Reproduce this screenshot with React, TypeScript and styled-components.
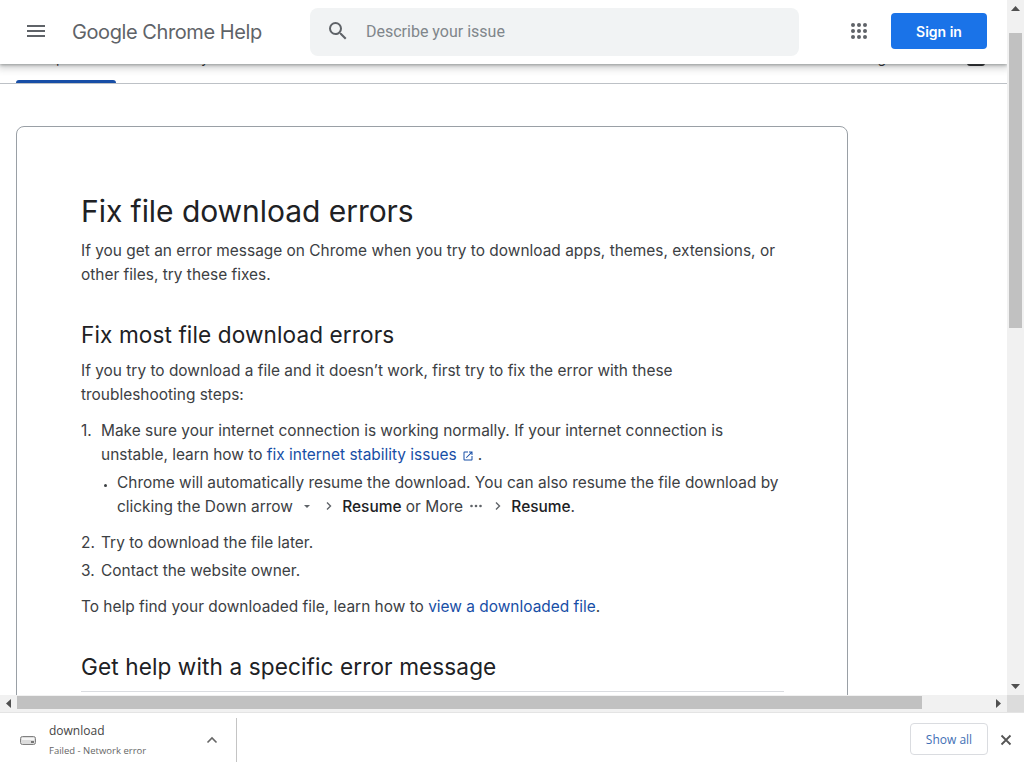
import React from "react";
import styled, { createGlobalStyle } from "styled-components";

const GlobalStyle = createGlobalStyle`
  html, body { margin: 0; padding: 0; height: 100%; overflow: hidden; background: #fff; }
  body { font-family: Inter, Roboto, sans-serif; color: #3c4043; }
  * { box-sizing: border-box; }
`;

const Shell = styled.div`
  width: 1024px;
  height: 768px;
  display: flex;
  flex-direction: column;
  overflow: hidden;
`;

const Viewport = styled.div`
  height: 712px;
  display: grid;
  grid-template-columns: 1007px 17px;
  grid-template-rows: 695px 17px;
`;

const Page = styled.div`
  position: relative;
  overflow: hidden;
  background: #fff;
`;

const Header = styled.header`
  position: absolute;
  top: 0;
  left: 0;
  right: 0;
  height: 64px;
  z-index: 2;
  background: #fff;
  box-shadow: 0 1px 3px rgba(60, 64, 67, 0.45), 0 3px 7px 2px rgba(60, 64, 67, 0.2);
  display: flex;
  align-items: center;
  padding: 0 20px 2px 24px;
`;

const IconButton = styled.div`
  width: 24px;
  height: 24px;
  color: #5f6368;
  flex: none;
`;

const Title = styled.div`
  margin-left: 24px;
  margin-top: 2px;
  width: 238px;
  flex: none;
  font-size: 20px;
  letter-spacing: -0.42px;
  color: #5f6368;
`;

const SearchBox = styled.div`
  width: 489px;
  height: 48px;
  margin-top: 2px;
  flex: none;
  background: #f1f3f4;
  border-radius: 8px;
  display: flex;
  align-items: center;
  padding: 0 16px 2px;
  gap: 16px;
`;

const Placeholder = styled.span`
  font-family: Roboto, sans-serif;
  font-size: 16px;
  color: #80868b;
`;

const Apps = styled.div`
  margin-left: 48px;
  width: 24px;
  height: 24px;
  flex: none;
  color: #5f6368;
`;

const SignIn = styled.div`
  margin-left: 20px;
  width: 96px;
  height: 36px;
  flex: none;
  background: #1a73e8;
  border-radius: 4px;
  color: #fff;
  font-size: 14px;
  font-weight: 600;
  display: flex;
  align-items: center;
  justify-content: center;
`;

const TabStrip = styled.nav`
  height: 84px;
  border-bottom: 1px solid #bdc1c6;
  padding: 0 22px 0 16px;
  display: flex;
  justify-content: space-between;
  align-items: flex-end;
`;

const Tab = styled.div`
  height: 44px;
  padding: 9px 20px 0 17px;
  font-size: 14px;
  line-height: 20px;
  color: #202124;
  white-space: nowrap;
`;

const ActiveTab = styled(Tab)`
  position: relative;
  width: 100px;
  padding: 9px 22px 0 18px;
  text-align: center;

  &::after {
    content: "";
    position: absolute;
    left: 0;
    right: 0;
    bottom: 0;
    height: 3px;
    background: #174ea6;
    border-radius: 3px 3px 0 0;
  }
`;

const ProductTab = styled(Tab)`
  padding-right: 13px;
`;

const TabGroup = styled.div`
  display: flex;
  align-items: flex-end;
`;

const StripBadge = styled.div`
  width: 18px;
  height: 18px;
  margin: 0 0 17px;
  background: #202124;
  border-radius: 3px;
`;

const Card = styled.article`
  width: 832px;
  height: 800px;
  margin: 42px 0 0 16px;
  border: 1px solid #9aa0a6;
  border-radius: 8px;
  padding: 64px 63px 0 64px;
`;

const H1 = styled.h1`
  margin: 0 0 8px;
  font-size: 30px;
  line-height: 40px;
  font-weight: 400;
  letter-spacing: -0.05px;
  color: #202124;
`;

const H2 = styled.h2`
  margin: 0 0 8px;
  font-size: 22.6px;
  line-height: 32px;
  font-weight: 400;
  letter-spacing: 0.1px;
  color: #202124;
`;

const Para = styled.p<{ $after?: number }>`
  margin: 0 0 ${(p) => p.$after ?? 12}px;
  font-size: 15.44px;
  line-height: 24px;
`;

const Steps = styled.ol`
  margin: 0 0 12px;
  padding: 0 0 0 20px;
  font-size: 15.44px;
  line-height: 24px;
  list-style: none;
  counter-reset: step;
`;

const Step = styled.li`
  position: relative;
  margin-bottom: 4px;
  counter-increment: step;

  &::before {
    content: counter(step) ".";
    position: absolute;
    left: -20px;
  }
`;

const SubList = styled.ul`
  margin: 4px 0 12px;
  padding: 0 0 0 16px;
  list-style-type: disc;
`;

const SubItem = styled.li`
  &::marker {
    font-size: 0.7em;
  }
`;

const Link = styled.a`
  color: #174ea6;
`;

const Strong = styled.span`
  font-weight: 500;
  color: #202124;
`;

const InlineIcon = styled.svg<{ $left?: number; $right?: number }>`
  display: inline-block;
  vertical-align: -2px;
  margin: 0 ${(p) => p.$right ?? 4}px 0 ${(p) => p.$left ?? 4}px;
`;

const Rule = styled.div`
  height: 1px;
  background: #dadce0;
  margin-top: 5px;
`;

const ScrollTrackV = styled.div`
  position: relative;
  background: #f1f1f1;
  display: flex;
  flex-direction: column;
  justify-content: space-between;
`;

const ThumbV = styled.div`
  position: absolute;
  top: 33px;
  left: 2px;
  width: 13px;
  height: 295px;
  background: #c1c1c1;
`;

const ScrollTrackH = styled.div`
  position: relative;
  background: #f1f1f1;
  display: flex;
  justify-content: space-between;
`;

const ThumbH = styled.div`
  position: absolute;
  top: 1px;
  left: 17px;
  width: 905px;
  height: 13px;
  background: #c1c1c1;
`;

const Arrow = styled.div`
  width: 17px;
  height: 17px;
  display: flex;
  align-items: center;
  justify-content: center;
  color: #505050;
`;

const Corner = styled.div`
  background: #dcdcdc;
`;

const DownloadBar = styled.footer`
  height: 56px;
  background: #fff;
  border-top: 1px solid #e4e4e4;
  display: flex;
  align-items: center;
  font-family: "Open Sans", sans-serif;
`;

const Item = styled.div`
  width: 237px;
  height: 44px;
  margin-bottom: 2px;
  flex: none;
  border-right: 1px solid #c4c4c4;
  display: flex;
  align-items: center;
  padding-left: 20px;
`;

const FileText = styled.div`
  margin-left: 13px;
  margin-top: 2px;
  width: 157px;
  flex: none;
`;

const FileName = styled.div`
  font-size: 12px;
  line-height: 18px;
  color: #444;
`;

const FileStatus = styled.div`
  font-size: 9.5px;
  line-height: 16px;
  margin-top: 3px;
  color: #666;
`;

const ShowAll = styled.div`
  margin-left: auto;
  width: 78px;
  height: 32px;
  margin-bottom: 3px;
  border: 1px solid #dadce0;
  border-radius: 4px;
  color: #3f6fb5;
  font-size: 12px;
  display: flex;
  align-items: center;
  justify-content: center;
`;

const CloseButton = styled.div`
  width: 36px;
  margin-bottom: 2px;
  display: flex;
  justify-content: center;
  color: #555;
`;

const TriUp = () => (
  <svg width="9" height="5" viewBox="0 0 9 5"><path d="M4.5 0 9 5H0z" fill="currentColor" /></svg>
);
const TriDown = () => (
  <svg width="9" height="5" viewBox="0 0 9 5"><path d="M0 0h9L4.5 5z" fill="currentColor" /></svg>
);
const TriLeft = () => (
  <svg width="5" height="9" viewBox="0 0 5 9"><path d="M5 0v9L0 4.5z" fill="currentColor" /></svg>
);
const TriRight = () => (
  <svg width="5" height="9" viewBox="0 0 5 9"><path d="M0 0v9l5-4.5z" fill="currentColor" /></svg>
);

const Chevron = () => (
  <InlineIcon $right={1} width="16" height="16" viewBox="0 0 16 16" fill="none">
    <path d="M6 4.5 9.500 8 6 11.5" stroke="#5f6368" strokeWidth="1.4" />
  </InlineIcon>
);

export default function App() {
  return (
    <Shell>
      <GlobalStyle />
      <Viewport>
        <Page>
          <Header>
            <IconButton>
              <svg width="24" height="24" viewBox="0 0 24 24" fill="currentColor">
                <path d="M3 18h18v-2H3v2zm0-5h18v-2H3v2zm0-7v2h18V6H3z" />
              </svg>
            </IconButton>
            <Title>Google Chrome Help</Title>
            <SearchBox>
              <IconButton>
                <svg width="24" height="24" viewBox="0 0 24 24" fill="currentColor">
                  <path d="M15.5 14h-.79l-.28-.27A6.471 6.471 0 0 0 16 9.5 6.5 6.5 0 1 0 9.5 16c1.61 0 3.09-.59 4.23-1.57l.27.28v.79l5 4.99L20.49 19l-4.99-5zm-6 0C7.01 14 5 11.99 5 9.5S7.01 5 9.5 5 14 7.01 14 9.5 11.99 14 9.5 14z" />
                </svg>
              </IconButton>
              <Placeholder>Describe your issue</Placeholder>
            </SearchBox>
            <Apps>
              <svg width="24" height="24" viewBox="0 0 24 24" fill="currentColor">
                <circle cx="6" cy="6" r="2" /><circle cx="12" cy="6" r="2" /><circle cx="18" cy="6" r="2" />
                <circle cx="6" cy="12" r="2" /><circle cx="12" cy="12" r="2" /><circle cx="18" cy="12" r="2" />
                <circle cx="6" cy="18" r="2" /><circle cx="12" cy="18" r="2" /><circle cx="18" cy="18" r="2" />
              </svg>
            </Apps>
            <SignIn>Sign in</SignIn>
          </Header>
          <TabStrip>
            <TabGroup>
              <ActiveTab>Help Center</ActiveTab>
              <Tab>Community</Tab>
            </TabGroup>
            <TabGroup>
              <ProductTab>Google Chrome</ProductTab>
              <StripBadge />
            </TabGroup>
          </TabStrip>
          <Card>
            <H1>Fix file download errors</H1>
            <Para $after={32}>
              If you get an error message on Chrome when you try to download apps, themes, extensions, or other
              files, try these fixes.
            </Para>
            <H2>Fix most file download errors</H2>
            <Para>
              If you try to download a file and it doesn’t work, first try to fix the error with these
              troubleshooting steps:
            </Para>
            <Steps>
              <Step>
                Make sure your internet connection is working normally. If your internet connection is unstable,
                learn how to <Link>fix internet stability issues</Link>
                <InlineIcon $left={5} width="12" height="12" viewBox="0 0 24 24" fill="#174ea6">
                  <path d="M19 19H5V5h7V3H5a2 2 0 0 0-2 2v14a2 2 0 0 0 2 2h14c1.100 0 2-.9 2-2v-7h-2v7zM14 3v2h3.59l-9.83 9.83 1.41 1.41L19 6.41V10h2V3h-7z" />
                </InlineIcon>
                .
                <SubList>
                  <SubItem>
                    Chrome will automatically resume the download. You can also resume the file download by clicking
                    the Down arrow
                    <InlineIcon $left={6} $right={2} width="16" height="16" viewBox="0 0 16 16">
                      <path d="M5 7h6L8 10z" fill="#5f6368" />
                    </InlineIcon>
                    <Chevron /> <Strong>Resume</Strong> or More
                    <InlineIcon $left={5} $right={2} width="16" height="16" viewBox="0 0 16 16" fill="#5f6368">
                      <circle cx="3.5" cy="8" r="1.3" /><circle cx="8" cy="8" r="1.3" /><circle cx="12.5" cy="8" r="1.3" />
                    </InlineIcon>
                    <Chevron /> <Strong>Resume</Strong>.
                  </SubItem>
                </SubList>
              </Step>
              <Step>Try to download the file later.</Step>
              <Step>Contact the website owner.</Step>
            </Steps>
            <Para $after={32}>
              To help find your downloaded file, learn how to <Link>view a downloaded file</Link>.
            </Para>
            <H2>Get help with a specific error message</H2>
            <Rule />
          </Card>
        </Page>
        <ScrollTrackV>
          <ThumbV />
          <Arrow><TriUp /></Arrow>
          <Arrow><TriDown /></Arrow>
        </ScrollTrackV>
        <ScrollTrackH>
          <ThumbH />
          <Arrow><TriLeft /></Arrow>
          <Arrow><TriRight /></Arrow>
        </ScrollTrackH>
        <Corner />
      </Viewport>
      <DownloadBar>
        <Item>
          <svg width="16" height="12" viewBox="0 0 16 12">
            <rect x="0.5" y="2.5" width="15" height="8" rx="2" fill="#dcdcdc" stroke="#808080" />
            <rect x="2" y="4" width="12" height="2" fill="#f6f6f6" />
            <rect x="11" y="7" width="3" height="2" fill="#777" />
          </svg>
          <FileText>
            <FileName>download</FileName>
            <FileStatus>Failed - Network error</FileStatus>
          </FileText>
          <svg width="12" height="8" viewBox="0 0 12 8" fill="none">
            <path d="M1.5 6.5 6 2l4.5 4.5" stroke="#666" strokeWidth="1.6" />
          </svg>
        </Item>
        <ShowAll>Show all</ShowAll>
        <CloseButton>
          <svg width="12" height="12" viewBox="0 0 12 12" fill="none">
            <path d="M1.5 1.5l9 9M10.500 1.5l-9 9" stroke="#555" strokeWidth="1.8" />
          </svg>
        </CloseButton>
      </DownloadBar>
    </Shell>
  );
}
